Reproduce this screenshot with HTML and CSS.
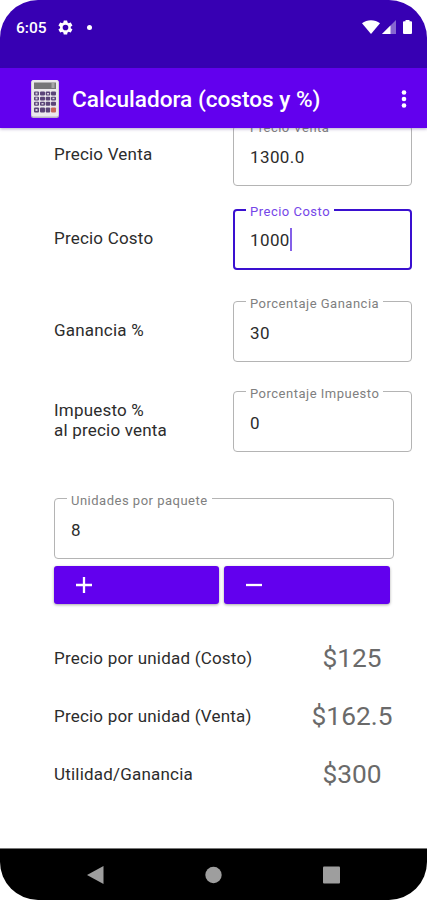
FILE: index.html
```html
<!DOCTYPE html>
<html lang="es">
<head>
    <meta charset="UTF-8">
    <meta name="viewport" content="width=device-width, initial-scale=1.0">
    <title>Calculadora (costos y %)</title>
    <link rel="stylesheet" href="styles.css">
</head>
<body>
    <div class="phone">
        <div class="status-bar">
            <span class="time">6:05</span>
            <svg class="gear" viewBox="0 0 24 24"><path fill-rule="evenodd" d="M19.4 13a7.500 7.500 0 0 0 0-2l2.100-1.600c.2-.2.3-.4.1-.7l-2-3.400c-.1-.2-.4-.3-.6-.2l-2.500 1a7.300 7.300 0 0 0-1.700-1l-.4-2.600a.5.500 0 0 0-.5-.5h-4a.5.500 0 0 0-.5.500L9 5.100c-.6.300-1.200.6-1.700 1l-2.500-1c-.2-.1-.5 0-.6.200l-2 3.400c-.1.300-.1.500.1.700L4.400 11a7.500 7.500 0 0 0 0 2l-2.100 1.600c-.2.200-.2.400-.1.700l2 3.400c.1.200.4.300.6.200l2.500-1c.5.400 1.100.8 1.700 1l.4 2.600c0 .3.200.5.500.5h4c.3 0 .5-.2.500-.5l.4-2.600c.6-.2 1.200-.6 1.700-1l2.500 1c.2.100.5 0 .6-.2l2-3.400c.2-.3.1-.5-.1-.7zM12 16a4 4 0 1 1 0-8 4 4 0 0 1 0 8z"/></svg>
            <span class="dot"></span>
            <div class="status-icons">
                <svg width="18" height="14" viewBox="0 0 18 14"><path d="M0 3.200C5-.9 13-.9 18 3.200L9 14z"/></svg>
                <svg width="14" height="14" viewBox="0 0 14 14"><path d="M14 0v14H0z" opacity=".4"/><path d="M8.500 5.500V14H0z"/></svg>
                <svg class="battery" width="9" height="14" viewBox="0 0 9 14"><path d="M2.500 0h4v1.300H8q1 0 1 1V13q0 1-1 1H1q-1 0-1-1V2.300q0-1 1-1h1.500z"/></svg>
            </div>
        </div>

        <header class="app-bar">
            <svg class="logo" width="30" height="40" viewBox="0 0 30 40">
                <rect x="1" y="1" width="28" height="38" rx="2.500" fill="#b9b3c4"/>
                <rect x="1.500" y="1" width="27" height="36.500" rx="2" fill="#ece9ed"/>
                <rect x="4" y="3.500" width="22" height="6.500" fill="#777678"/>
                <rect x="21.500" y="4" width="3" height="5" fill="#a5a4a6"/>
                <g fill="#5b4578">
                    <rect x="4" y="12.500" width="5" height="4" rx="1"/>
                    <rect x="10" y="12.500" width="5" height="4" rx="1"/>
                    <rect x="15.700" y="12.500" width="4.500" height="4" rx="1"/>
                    <rect x="21" y="12.500" width="5" height="4" rx="1"/>
                    <rect x="4" y="17.700" width="5" height="3.800" rx="1"/>
                    <rect x="10" y="17.700" width="5" height="3.800" rx="1"/>
                    <rect x="15.700" y="17.700" width="4.500" height="3.800" rx="1"/>
                    <rect x="21" y="17.700" width="5" height="3.800" rx="1"/>
                    <rect x="4" y="22.700" width="5" height="4" rx="1"/>
                    <rect x="10" y="22.700" width="5" height="4" rx="1"/>
                    <rect x="15.700" y="22.700" width="4.500" height="4" rx="1"/>
                    <rect x="21" y="22.700" width="5" height="4" rx="1"/>
                    <rect x="4" y="28.500" width="5" height="5" rx="1"/>
                    <rect x="10" y="28.500" width="5" height="5" rx="1"/>
                    <rect x="15.700" y="28.500" width="4.500" height="5" rx="1"/>
                </g>
                <rect x="21" y="28.500" width="5" height="5" rx="1" fill="#c4685c"/>
                <g fill="#d5cfdc">
                    <rect x="5.500" y="13.500" width="2" height="2"/>
                    <rect x="5.500" y="18.500" width="2" height="2"/>
                    <rect x="5.500" y="23.700" width="2" height="2"/>
                    <rect x="5.500" y="30" width="2" height="2"/>
                    <rect x="11.500" y="24" width="2" height="1.500"/>
                    <rect x="17" y="14" width="2" height="1.500"/>
                    <rect x="22.500" y="18.700" width="2" height="1.500"/>
                </g>
            </svg>
            <h1>Calculadora (costos y %)</h1>
            <svg class="more" width="6" height="20" viewBox="0 0 6 20"><circle cx="3" cy="3.500" r="2.300"/><circle cx="3" cy="10" r="2.300"/><circle cx="3" cy="16.500" r="2.300"/></svg>
        </header>

        <main class="content">
            <div class="row">
                <span class="label">Precio Venta</span>
                <fieldset class="field">
                    <legend>Precio Venta</legend>
                    <span class="value">1300.0</span>
                </fieldset>
            </div>
            <div class="row costo">
                <span class="label">Precio Costo</span>
                <fieldset class="field focused">
                    <legend>Precio Costo</legend>
                    <span class="value">1000</span><span class="caret"></span>
                </fieldset>
            </div>
            <div class="row ganancia">
                <span class="label">Ganancia %</span>
                <fieldset class="field">
                    <legend>Porcentaje Ganancia</legend>
                    <span class="value">30</span>
                </fieldset>
            </div>
            <div class="row impuesto">
                <span class="label">Impuesto %<br>al precio venta</span>
                <fieldset class="field">
                    <legend>Porcentaje Impuesto</legend>
                    <span class="value">0</span>
                </fieldset>
            </div>

            <fieldset class="field units">
                <legend>Unidades por paquete</legend>
                <span class="value">8</span>
            </fieldset>
            <div class="buttons">
                <button aria-label="Sumar"><svg width="16" height="16" viewBox="0 0 16 16"><path d="M8 0v16M0 8h16"/></svg></button>
                <button aria-label="Restar"><svg width="16" height="16" viewBox="0 0 16 16"><path d="M0 8h16"/></svg></button>
            </div>

            <div class="results">
                <div class="result"><span>Precio por unidad (Costo)</span><span class="amount">$125</span></div>
                <div class="result"><span>Precio por unidad (Venta)</span><span class="amount">$162.5</span></div>
                <div class="result"><span>Utilidad/Ganancia</span><span class="amount">$300</span></div>
            </div>
        </main>

        <nav class="nav-bar">
            <svg width="17" height="18" viewBox="0 0 17 18"><path d="M16.500 0v18L0 9z"/></svg>
            <svg width="17" height="18" viewBox="0 0 17 18"><circle cx="8.500" cy="9" r="8.200"/></svg>
            <svg width="17" height="18" viewBox="0 0 17 18"><rect y=".5" width="17" height="17" rx="1"/></svg>
        </nav>
    </div>
</body>
</html>
```
FILE: styles.css
```css
:root {
    --primary: #6200ee;
    --primary-dark: #3700b3;
    --border: #b4b4b4;
    --text: #2c2c2c;
    --muted: #808080;
}

* {
    margin: 0;
    padding: 0;
    box-sizing: border-box;
    font-family: Roboto, Arial, sans-serif;
}

body {
    background: #ffffff;
}

.phone {
    width: 427px;
    height: 900px;
    display: flex;
    flex-direction: column;
    overflow: hidden;
    border-radius: 38px;
    background: #ffffff;
}

.status-bar {
    height: 68px;
    padding: 18px 15px 0 16px;
    display: flex;
    align-items: flex-start;
    background: var(--primary-dark);
    color: #ffffff;
    fill: #ffffff;
}

.time {
    font-size: 15.5px;
    font-weight: 500;
    line-height: 20px;
}

.gear {
    width: 17px;
    height: 17px;
    margin: 1px 0 0 10px;
}

.dot {
    width: 5px;
    height: 5px;
    margin: 7px 0 0 13px;
    border-radius: 50%;
    background: #ffffff;
}

.status-icons {
    display: flex;
    gap: 2px;
    margin: 2px 0 0 auto;
}

.battery {
    margin-left: 5px;
}

.app-bar {
    position: relative;
    z-index: 1;
    flex: none;
    height: 60px;
    padding: 2px 20px 0 30px;
    display: flex;
    align-items: center;
    background: var(--primary);
    box-shadow: 0 1px 3px rgba(60,40,120,0.4);
    color: #ffffff;
}

h1 {
    margin-left: 12px;
    font-size: 22.6px;
    font-weight: 500;
    white-space: nowrap;
}

.more {
    margin-left: auto;
    fill: #ffffff;
}

.content {
    flex: 1;
    min-height: 0;
    margin-top: -10px;
    padding: 0 15px 0 54px;
    color: var(--text);
}

.row {
    display: flex;
    justify-content: space-between;
    align-items: center;
}

.costo {
    margin-top: 16px;
}

.ganancia {
    margin-top: 24px;
}

.impuesto {
    margin-top: 22px;
}

.label {
    padding-top: 3px;
}

.label,
.result {
    font-size: 17px;
    line-height: 20px;
    letter-spacing: 0.2px;
}

.field {
    width: 179px;
    height: 68px;
    padding: 0 16px;
    border: 1px solid var(--border);
    border-radius: 4px;
}

.field legend {
    height: 15px;
    margin-left: -4px;
    padding: 0 4px;
    font-size: 13px;
    line-height: 19px;
    letter-spacing: 0.5px;
    color: var(--muted);
}

.value {
    display: inline-block;
    padding-top: 13px;
    font-size: 17px;
    line-height: 22px;
    letter-spacing: 0.4px;
}

.focused {
    padding: 0 15px;
    border: 2px solid #3a10d0;
}

.focused legend {
    color: #7546e8;
}

.focused .value {
    padding-top: 12px;
}

.caret {
    display: inline-block;
    width: 2px;
    height: 23px;
    vertical-align: -5px;
    background: #8460e8;
}

.units {
    width: 340px;
    margin-top: 39px;
}

.buttons {
    display: flex;
    gap: 5px;
    margin-top: 7px;
}

button {
    width: 165px;
    height: 38px;
    padding-left: 22px;
    display: flex;
    align-items: center;
    border: none;
    border-radius: 3px;
    background: var(--primary);
    box-shadow: 0 1px 3px rgba(0,0,0,0.35);
}

button + button {
    width: 166px;
}

button svg {
    stroke: #ffffff;
    stroke-width: 2.3;
}

.results {
    margin-top: 25px;
}

.result {
    height: 58px;
    display: flex;
    align-items: center;
    justify-content: space-between;
}

.amount {
    width: 120px;
    font-size: 26.3px;
    letter-spacing: 0;
    text-align: center;
    color: #6a6a6a;
}

.nav-bar {
    flex: none;
    height: 52px;
    padding: 0 87px;
    display: flex;
    align-items: center;
    justify-content: space-between;
    border-top: 1px solid #777777;
    background: #000000;
    fill: #9e9e9e;
}
```
